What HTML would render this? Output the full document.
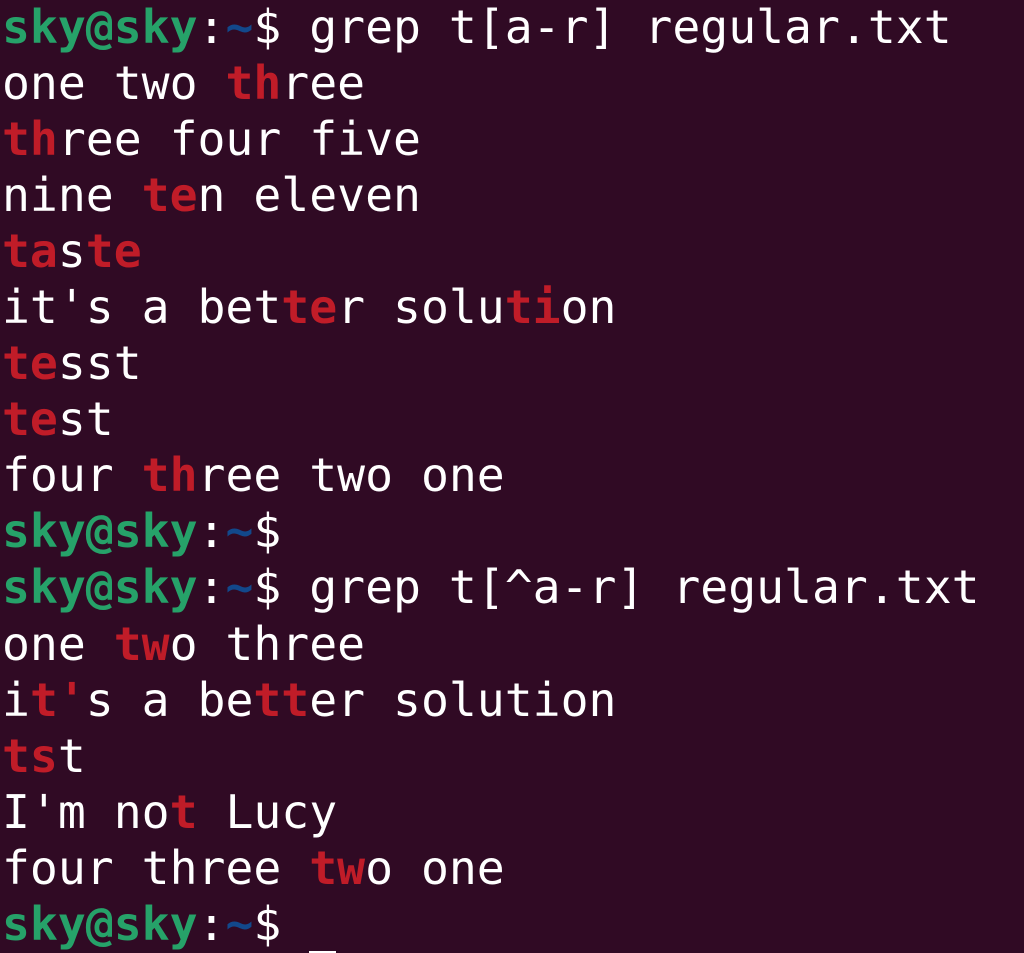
<!DOCTYPE html>
<html><head><meta charset="utf-8"><style>
html,body{margin:0;padding:0;background:#300a24;width:1024px;height:953px;overflow:hidden}
pre{margin:0;padding:0 0 0 2px;font-family:"DejaVu Sans Mono","Liberation Mono",monospace;font-size:46.4px;line-height:56.05px;color:#ffffff;position:relative;top:-1px;letter-spacing:0}
.g{color:#26a269;font-weight:bold}
.b{color:#12488b;font-weight:bold}
.r{color:#c01c28;font-weight:bold}
.cur{display:inline-block;width:27px;height:4px;background:#fff;vertical-align:-15px}
</style></head><body><pre><span class="g">sky@sky</span>:<span class="b">~</span>$ grep t[a-r] regular.txt
one two <span class="r">th</span>ree
<span class="r">th</span>ree four five
nine <span class="r">te</span>n eleven
<span class="r">ta</span>s<span class="r">te</span>
it's a bet<span class="r">te</span>r solu<span class="r">ti</span>on
<span class="r">te</span>sst
<span class="r">te</span>st
four <span class="r">th</span>ree two one
<span class="g">sky@sky</span>:<span class="b">~</span>$
<span class="g">sky@sky</span>:<span class="b">~</span>$ grep t[^a-r] regular.txt
one <span class="r">tw</span>o three
i<span class="r">t'</span>s a be<span class="r">tt</span>er solution
<span class="r">ts</span>t
I'm no<span class="r">t </span>Lucy
four three <span class="r">tw</span>o one
<span class="g">sky@sky</span>:<span class="b">~</span>$ <span class="cur"></span></pre></body></html>
